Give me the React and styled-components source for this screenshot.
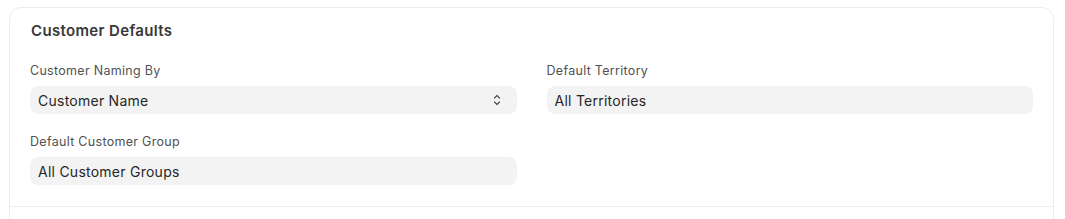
import React from "react";
import styled, { createGlobalStyle } from "styled-components";

const Global = createGlobalStyle`
  html, body { margin: 0; padding: 0; background: #ffffff; }
  body { font-family: Inter, "Noto Sans", sans-serif; -webkit-font-smoothing: antialiased; }
  * { box-sizing: border-box; }
`;

const Page = styled.div`
  padding: 7px 11px 0 9px;
`;

const Card = styled.div`
  border: 1px solid #ededed;
  border-radius: 12px;
  background: #ffffff;
  min-height: 260px;
`;

const Section = styled.section`
  padding: 13px 20px 21px 20px;
  border-bottom: 1px solid #ededed;
`;

const Title = styled.h3`
  margin: 0 0 22px 0;
  padding-left: 1px;
  font-size: 15px;
  line-height: 20px;
  font-weight: 600;
  color: #383838;
  letter-spacing: 0.35px;
`;

const Grid = styled.div`
  display: grid;
  grid-template-columns: 1fr 1fr;
  column-gap: 30px;
  row-gap: 20px;
`;

const Field = styled.div`
  display: flex;
  flex-direction: column;
  gap: 7px;
`;

const Label = styled.label`
  font-size: 12.5px;
  line-height: 16px;
  color: #525252;
  letter-spacing: 0.3px;
`;

const Control = styled.div`
  position: relative;
  height: 28px;
  border-radius: 8px;
  background: #f3f3f3;
  display: flex;
  align-items: center;
  padding: 0 8px;
  font-size: 14px;
  color: #262626;
  letter-spacing: 0.25px;
`;

const Arrow = styled.svg`
  position: absolute;
  right: 14px;
  top: 7px;
`;

const Chevrons = () => (
  <Arrow width="12" height="14" viewBox="0 0 12 14" fill="none">
    <path d="M3.5 5 L6 2.5 L8.5 5" stroke="#525252" strokeWidth="1.2" strokeLinecap="round" strokeLinejoin="round" />
    <path d="M3.5 9 L6 11.5 L8.5 9" stroke="#525252" strokeWidth="1.2" strokeLinecap="round" strokeLinejoin="round" />
  </Arrow>
);

export default function App() {
  return (
    <>
      <Global />
      <Page>
        <Card>
          <Section>
            <Title>Customer Defaults</Title>
            <Grid>
              <Field>
                <Label>Customer Naming By</Label>
                <Control>
                  Customer Name
                  <Chevrons />
                </Control>
              </Field>
              <Field>
                <Label>Default Territory</Label>
                <Control>All Territories</Control>
              </Field>
              <Field>
                <Label>Default Customer Group</Label>
                <Control>All Customer Groups</Control>
              </Field>
            </Grid>
          </Section>
        </Card>
      </Page>
    </>
  );
}
